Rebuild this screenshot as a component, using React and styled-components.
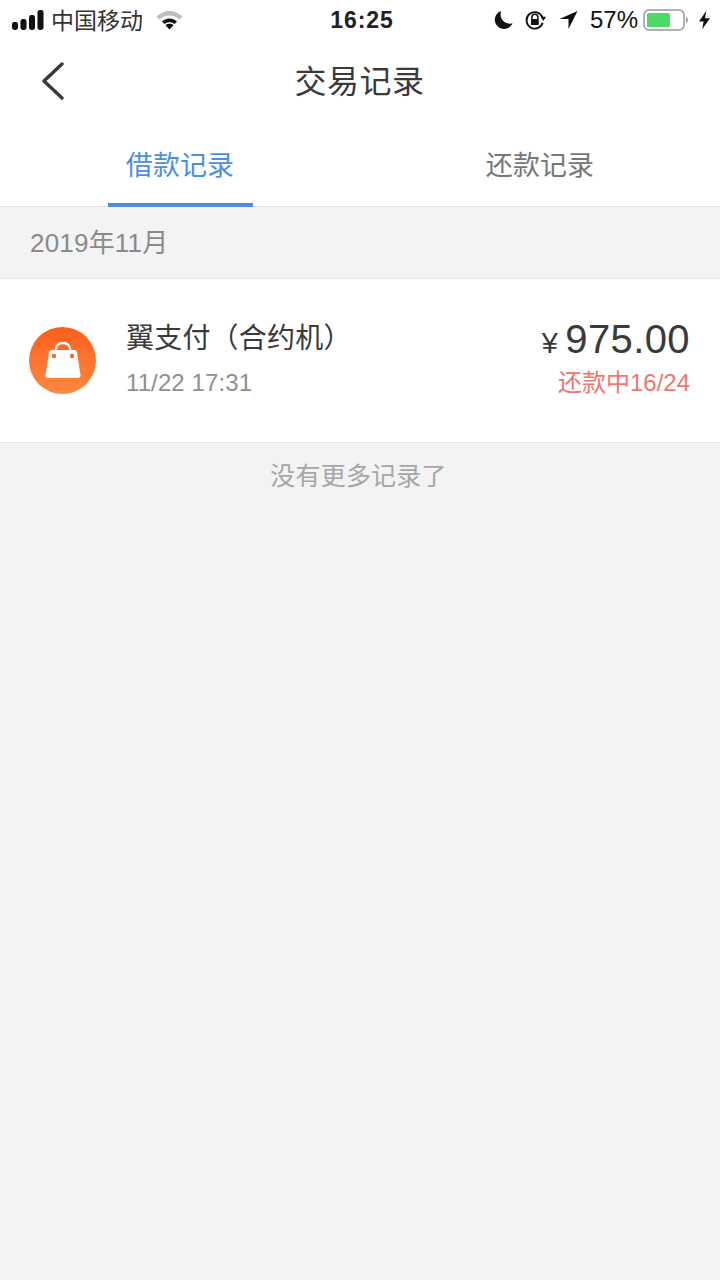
import React from "react";
import styled, { createGlobalStyle } from "styled-components";

const Global = createGlobalStyle`
  html, body { margin: 0; padding: 0; background: #f3f3f3; }
  body { font-family: "Liberation Sans", "Noto Sans CJK SC", sans-serif; }
`;
const Page = styled.div`width: 720px; height: 1280px; background: #f3f3f3; overflow: hidden; display: flex; flex-direction: column;`;
const StatusBar = styled.div`height: 40px; background: #fff; display: grid; grid-template-columns: 1fr auto 1fr; align-items: center; padding: 0 10px 0 12px; color: #111;`;
const StatusLeft = styled.div`display: flex; align-items: center; gap: 7px; font-size: 23px;`;
const StatusTime = styled.div`font-size: 23px; font-weight: 700; letter-spacing: .9px; color:#222; margin-left: 2px;`;
const StatusRight = styled.div`display: flex; align-items: center; justify-content: flex-end; gap: 12px; font-size: 24px;`;
const Carrier = styled.span`margin-right: 6px; color: #333; margin-top: -2px;`;
const Battery = styled.div`display:flex; align-items:center; gap:9px; margin-left:-7px;`;
const NavBar = styled.header`height: 82px; background: #fff; display: grid; grid-template-columns: 1fr auto 1fr; align-items: center; padding-bottom: 1px;`;
const Back = styled.div`padding-left: 41px; display: flex;`;
const Title = styled.h1`margin: 0 0 4px -1px; font-size: 32px; font-weight: 400; color: #3a3a3a; letter-spacing: .5px;`;
const Tabs = styled.nav`height: 83px; background: #fff; border-bottom: 1px solid #e4e4e4; display: grid; grid-template-columns: 1fr 1fr; box-sizing: content-box;`;
const Tab = styled.div`
  position: relative; display: flex; justify-content: center; align-items: center; padding-bottom: 2px; font-size: 27px; letter-spacing:.1px;
  color: ${p => p.$active ? "#4a90e2" : "#777"};
  ${p => p.$active ? `&::after{content:"";position:absolute;left:108px;width:145px;height:4px;bottom:-1px;background:#4f8ee6;}` : ""}
`;
const MonthHeader = styled.div`height: 71px; display:flex; align-items:center; padding: 0 0 5px 30px; box-sizing:border-box; font-size: 26px; color:#8a8a8a; letter-spacing:.2px;`;
const Row = styled.section`height: 163px; background:#fff; border-top:1px solid #e6e6e6; border-bottom:1px solid #e6e6e6; display:flex; align-items:center; padding: 0 30px 0 29px; box-sizing:content-box;`;
const IconCircle = styled.div`width:67px; height:67px; border-radius:50%; background:linear-gradient(180deg,#fd5f1c,#ff8840); display:flex; align-items:center; justify-content:center; flex:none; margin-top:-1px;`;
const Info = styled.div`margin-left:30px; flex:1; display:flex; flex-direction:column; gap:11px; margin-bottom:3px;`;
const Name = styled.div`font-size:28px; color:#3a3a3a; line-height:36px; letter-spacing:.2px;`;
const Meta = styled.div`font-size:24px; color:#8f8f8f; line-height:30px; letter-spacing:.1px;`;
const AmountCol = styled.div`display:flex; flex-direction:column; align-items:flex-end; gap:3px; margin-bottom:6px;`;
const Amount = styled.div`font-size:40px; line-height:44px; color:#3a3a3a; display:flex; align-items:baseline; gap:7px; letter-spacing:.4px;`;
const Yen = styled.span`font-size:29px;`;
const Progress = styled.div`font-size:24px; line-height:30px; color:#f4746b;`;
const Footer = styled.div`text-align:center; font-size:25px; color:#a6a6a6; padding-top:13px; letter-spacing:.2px; padding-right:3px;`;

const Signal = () => <svg width="32" height="20" viewBox="0 0 32 20" fill="#111"><rect x="0" y="12" width="6" height="8" rx="2.4"/><rect x="8.5" y="9" width="6" height="11" rx="2.4"/><rect x="17" y="5" width="6" height="15" rx="2.4"/><rect x="25.5" y="0" width="6" height="20" rx="2.4"/></svg>;
const Wifi = () => <svg width="27" height="20" viewBox="0 0 27 20"><path d="M0.5 6.5C8-1 19-1 26.5 6.5L23.5 9.5C17.5 4 9.5 4 3.5 9.5Z" fill="#bdbdbd"/><path d="M6 11.5C10.5 7.5 16.5 7.5 21 11.5L18.6 14C15.5 11.5 11.5 11.5 8.4 14Z" fill="#111"/><path d="M9.5 15.2C11.8 13.3 15.2 13.3 17.5 15.2L13.5 19.5Z" fill="#111"/></svg>;
const Moon = () => <svg width="19" height="20" viewBox="0 0 20 20" fill="#111"><path d="M7.5 0.5A9.7 9.7 0 1 0 19.5 13.5C13 15.5 4.5 9.5 7.5 0.5Z"/></svg>;
const Lock = () => <svg width="22" height="22" viewBox="0 0 24 22" fill="none" stroke="#111"><path d="M19 8A9 9 0 1 0 19.3 14" strokeWidth="2"/><path d="M17 7.5H23L20 12Z" fill="#111" stroke="none"/><path d="M7.5 10V8A3.3 3.3 0 0 1 14.1 8V10" strokeWidth="1.7"/><rect x="6.5" y="10" width="8.5" height="6.5" rx="1" fill="#111" stroke="none"/></svg>;
const Arrow = () => <svg width="19" height="20" viewBox="0 0 20 20" fill="#111"><path d="M19.5 0.5L0.5 9H10V19.5Z"/></svg>;
const BatteryIcon = () => <svg width="47" height="22" viewBox="0 0 47 22"><rect x="1" y="1" width="40" height="20" rx="5" fill="#fff" stroke="#999" strokeWidth="1.5"/><rect x="4" y="4" width="23" height="14" rx="1.5" fill="#4cd964"/><path d="M43 8C45.5 9 45.5 13 43 14Z" fill="#999"/></svg>;
const Bolt = () => <svg width="11" height="20" viewBox="0 0 12 20" fill="#111"><path d="M8 0L0 11.5H5L3.5 20L12 8H6.5Z"/></svg>;
const Chevron = () => <svg width="24" height="38" viewBox="0 0 24 38" fill="none" stroke="#3a3a3a" strokeWidth="3.4" strokeLinecap="round" strokeLinejoin="round"><path d="M21 2L3 19L21 36"/></svg>;
const Bag = () => <svg width="38" height="38" viewBox="0 0 38 38"><path d="M12 11V8C12 4.5 15 2 19 2s7 2.5 7 6V11" fill="none" stroke="#fff" strokeWidth="2.4"/><path d="M7.5 9H30.5Q32.5 9 33 11.5L36.500 34Q36.700 37 33.500 37H4.500Q1.300 37 1.500 34L5 11.500Q5.500 9 7.500 9Z" fill="#fff"/><path d="M12.500 9H25.500V8C23 5.500 15 5.500 12.500 8Z" fill="#fd6a26"/><circle cx="10" cy="15" r="2.200" fill="#fd6a26"/><circle cx="28" cy="15" r="2.200" fill="#fd6a26"/></svg>;

export default function App() {
  return (
    <Page>
      <Global />
      <StatusBar>
        <StatusLeft><Signal /><Carrier>中国移动</Carrier><Wifi /></StatusLeft>
        <StatusTime>16:25</StatusTime>
        <StatusRight><Moon /><Lock /><Arrow /><span>57%</span><Battery><BatteryIcon /><Bolt /></Battery></StatusRight>
      </StatusBar>
      <NavBar><Back><Chevron /></Back><Title>交易记录</Title><span /></NavBar>
      <Tabs><Tab $active>借款记录</Tab><Tab>还款记录</Tab></Tabs>
      <MonthHeader>2019年11月</MonthHeader>
      <Row>
        <IconCircle><Bag /></IconCircle>
        <Info><Name>翼支付（合约机）</Name><Meta>11/22 17:31</Meta></Info>
        <AmountCol><Amount><Yen>¥</Yen>975.00</Amount><Progress>还款中16/24</Progress></AmountCol>
      </Row>
      <Footer>没有更多记录了</Footer>
    </Page>
  );
}
